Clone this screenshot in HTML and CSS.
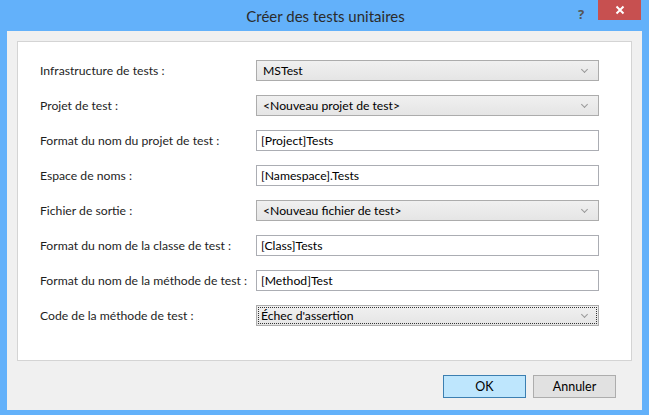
FILE: index.html
```html
<!DOCTYPE html>
<html lang="fr">
<head>
<meta charset="utf-8">
<link rel="stylesheet" href="styles.css">
</head>
<body>
<div class="window">
  <div class="titlebar">
    <div class="title">Créer des tests unitaires</div>
    <div class="help">?</div>
    <div class="close"><svg width="10" height="10" viewBox="0 0 10 10"><path d="M1.5 1.5 L8.5 8.5 M8.5 1.5 L1.5 8.5" stroke="#fff" stroke-width="2"/></svg></div>
  </div>
  <div class="client">
    <div class="panel">
      <div class="label">Infrastructure de tests :</div>
      <div class="combo"><span>MSTest</span><i class="chev"></i></div>
      <div class="label">Projet de test :</div>
      <div class="combo"><span>&lt;Nouveau projet de test&gt;</span><i class="chev"></i></div>
      <div class="label">Format du nom du projet de test :</div>
      <div class="text">[Project]Tests</div>
      <div class="label">Espace de noms :</div>
      <div class="text">[Namespace].Tests</div>
      <div class="label">Fichier de sortie :</div>
      <div class="combo"><span>&lt;Nouveau fichier de test&gt;</span><i class="chev"></i></div>
      <div class="label">Format du nom de la classe de test :</div>
      <div class="text">[Class]Tests</div>
      <div class="label">Format du nom de la méthode de test :</div>
      <div class="text">[Method]Test</div>
      <div class="label">Code de la méthode de test :</div>
      <div class="combo focus"><span>Échec d'assertion</span><i class="chev"></i></div>
    </div>
    <div class="footer">
      <button class="btn ok">OK</button>
      <button class="btn">Annuler</button>
    </div>
  </div>
</div>
</body>
</html>
```
FILE: styles.css
```css
html, body {
  margin: 0;
  padding: 0;
}
body {
  width: 649px;
  height: 415px;
  background: #63b1fa;
  font-family: Lato, "Noto Sans", sans-serif;
  font-size: 12.2px;
  color: #000;
  overflow: hidden;
}
.window {
  display: flex;
  flex-direction: column;
  height: 415px;
}
.titlebar {
  position: relative;
  height: 31px;
  flex: none;
}
.title {
  text-align: center;
  font-size: 15px;
  line-height: 32px;
  color: #2b2b2b;
  padding-left: 2px;
}
.help {
  position: absolute;
  left: 578px;
  top: 5px;
  font-family: "Noto Sans", sans-serif;
  font-size: 13px;
  font-weight: bold;
  color: #555;
}
.close {
  position: absolute;
  left: 598px;
  top: 0;
  width: 43px;
  height: 20px;
  background: #c75050;
  display: flex;
  align-items: center;
  justify-content: center;
}
.client {
  margin: 0 7px 5px 7px;
  flex: 1;
  background: #f0f0f0;
  padding: 10px 10px 0 10px;
  display: flex;
  flex-direction: column;
  box-sizing: border-box;
}
.panel {
  height: 320px;
  box-sizing: border-box;
  background: #fff;
  border: 1px solid #d4d4d4;
  padding: 18px 0 0 22px;
  display: grid;
  grid-template-columns: 216px 343px;
  grid-auto-rows: 21px;
  row-gap: 14px;
  align-content: start;
}
.label {
  line-height: 22px;
  color: #1e1e1e;
  white-space: nowrap;
}
.combo, .text {
  box-sizing: border-box;
  height: 21px;
  border: 1px solid #acacac;
  line-height: 19px;
  padding-left: 6px;
  position: relative;
  white-space: nowrap;
}
.combo {
  background: linear-gradient(#f0f0f0, #e5e5e5);
}
.text {
  border-color: #abadb3;
  background: #fff;
  padding-left: 4px;
}
.combo.focus::before {
  content: "";
  position: absolute;
  left: 1px;
  top: 1px;
  right: 1px;
  bottom: 1px;
  border: 1px dotted #333;
}
.combo.focus {
  padding-left: 4px;
}
.chev {
  position: absolute;
  right: 11px;
  top: 6px;
  width: 4px;
  height: 4px;
  border-right: 1px solid #999;
  border-bottom: 1px solid #999;
  transform: rotate(45deg);
}
.footer {
  display: flex;
  justify-content: flex-end;
  gap: 7px;
  padding: 14px 16px 0 0;
}
.btn {
  width: 83px;
  height: 23px;
  box-sizing: border-box;
  border: 1px solid #adadad;
  background: #e1e1e1;
  font-family: Lato, "Noto Sans", sans-serif;
  font-size: 12.5px;
  color: #000;
  padding: 0;
}
.btn.ok {
  background: #bee6fd;
  border-color: #3c7fb1;
}
```
